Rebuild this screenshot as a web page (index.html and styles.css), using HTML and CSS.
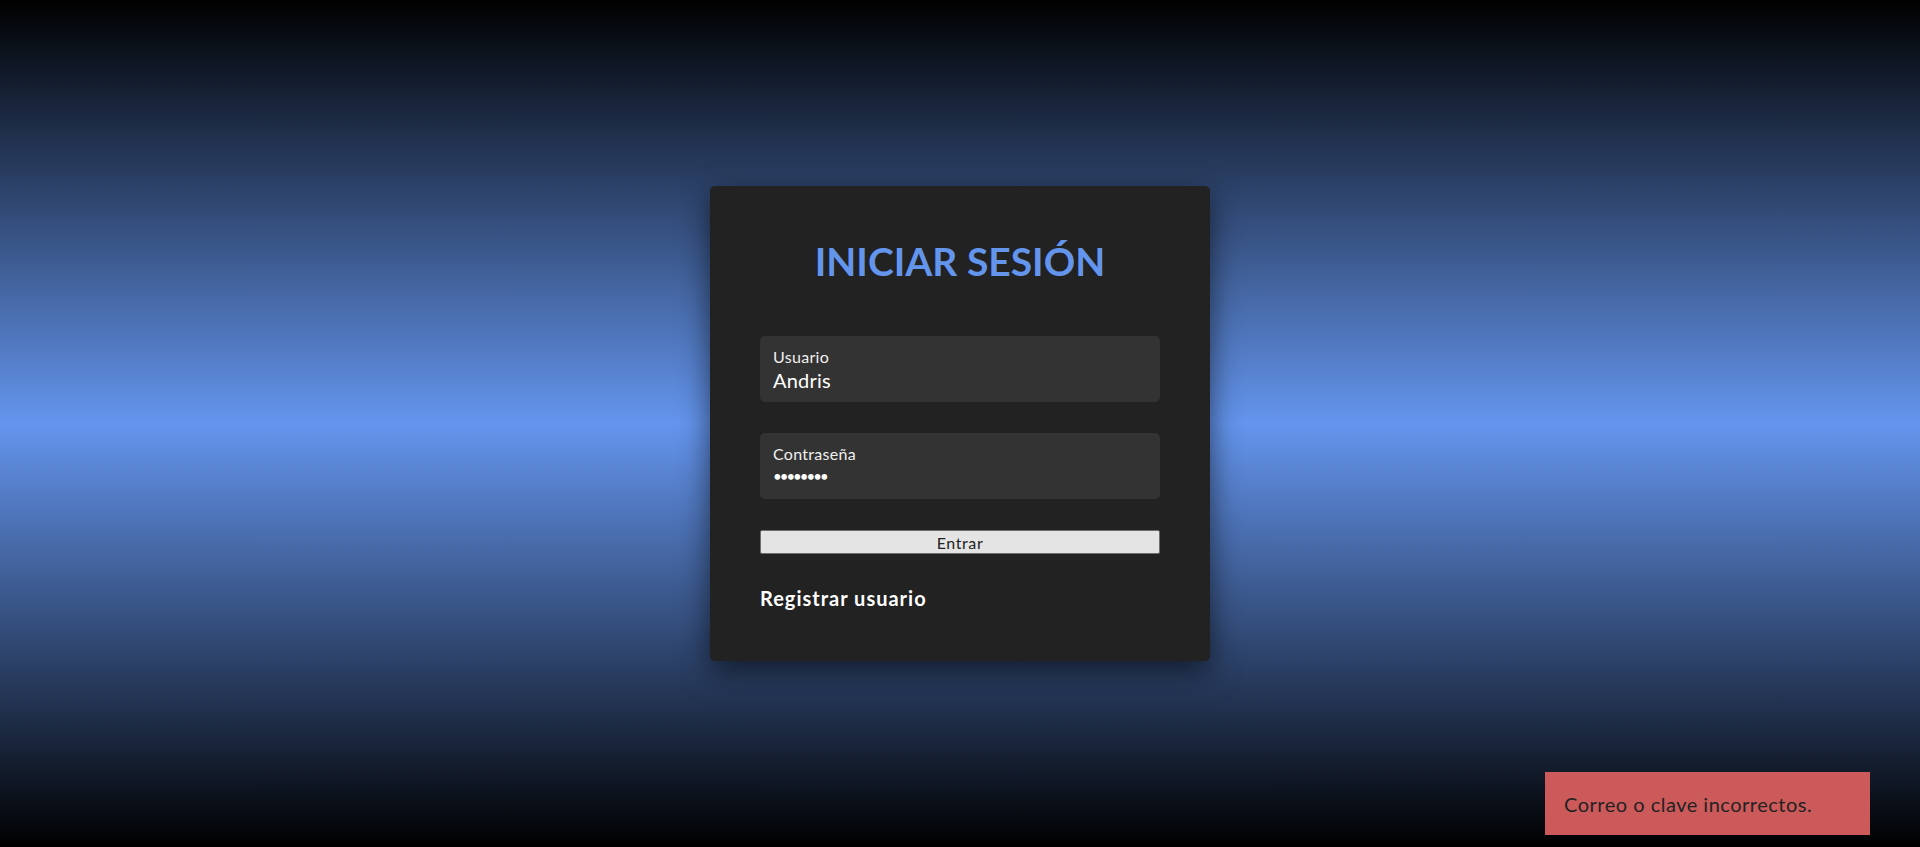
FILE: index.html
```html
<!DOCTYPE html>
<html lang="es">
<head>
<meta charset="utf-8">
<title>Iniciar sesión</title>
<link rel="stylesheet" href="styles.css">
</head>
<body>
<main class="page">
  <section class="card">
    <h1 class="title">INICIAR SESIÓN</h1>
    <div class="field">
      <span class="field-label">Usuario</span>
      <span class="field-value">Andris</span>
    </div>
    <div class="field">
      <span class="field-label">Contraseña</span>
      <span class="field-value field-pass">••••••••</span>
    </div>
    <button class="submit" type="button">Entrar</button>
    <a class="register" href="#">Registrar usuario</a>
  </section>
</main>
<div class="toast">Correo o clave incorrectos.</div>
</body>
</html>
```
FILE: styles.css
```css
* { box-sizing: border-box; }
html, body {
  margin: 0;
  height: 100%;
}
body {
  font-family: "Lato", "Noto Sans", sans-serif;
  background: linear-gradient(#000000, #6495ed 50%, #000000);
  overflow: hidden;
}
.page {
  height: 847px;
  display: flex;
  justify-content: center;
  align-items: flex-start;
  padding-top: 186px;
}
.card {
  width: 500px;
  height: 475px;
  background: #222222;
  border-radius: 5px;
  box-shadow: 0 10px 30px rgba(0, 0, 0, 0.6);
  padding: 0 50px;
  display: flex;
  flex-direction: column;
}
.title {
  margin: 54px 0 0;
  height: 46px;
  text-align: center;
  color: #6495ed;
  font-size: 39px;
  line-height: 43px;
  font-weight: 700;
  letter-spacing: 0;
}
.field {
  height: 66px;
  background: #333333;
  border-radius: 5px;
  padding: 11px 13px 0;
  display: flex;
  flex-direction: column;
  color: #ffffff;
  margin-top: 50px;
}
.field + .field { margin-top: 31px; }
.field-label {
  font-size: 16px;
  line-height: 20px;
  color: #f0f0f0;
  letter-spacing: 0.3px;
}
.field-value {
  font-size: 20px;
  line-height: 26px;
  letter-spacing: 0.2px;
}
.field-pass {
  font-size: 15px;
  line-height: 24px;
  letter-spacing: -2px;
}
.submit {
  margin-top: 31px;
  height: 24px;
  width: 100%;
  background: #e4e4e4;
  border: 1px solid #6e6e6e;
  border-radius: 2px;
  font-family: inherit;
  font-size: 16px;
  letter-spacing: 0.6px;
  color: #222222;
  padding: 0;
}
.register {
  margin-top: 32px;
  font-size: 20px;
  font-weight: 700;
  letter-spacing: 1px;
  color: #ffffff;
  text-decoration: none;
}
.toast {
  position: fixed;
  right: 50px;
  bottom: 12px;
  width: 325px;
  height: 63px;
  background: #cd5a5b;
  color: #222222;
  font-size: 20px;
  letter-spacing: 0.5px;
  display: flex;
  align-items: center;
  padding-left: 19px;
}
```
